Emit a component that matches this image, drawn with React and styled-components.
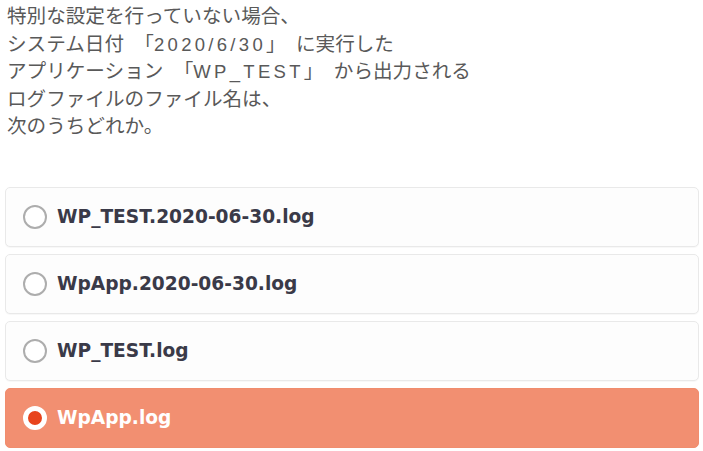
import styled, { createGlobalStyle } from 'styled-components';

const GlobalStyle = createGlobalStyle`
  html, body {
    margin: 0;
    padding: 0;
    background: #ffffff;
  }
`;

const Wrapper = styled.div`
  width: 703px;
  padding: 1px 4px 0 5px;
  box-sizing: border-box;
`;

const Question = styled.p`
  margin: 0 0 48px;
  padding-left: 2px;
  font-family: "Noto Sans CJK JP", "Noto Sans", sans-serif;
  font-size: 19.6px;
  line-height: 27.5px;
  word-spacing: 6px;
  color: #595959;
`;

// 半角英数字は字間を広めに
const Latin = styled.span`
  font-family: "Liberation Sans", Arial, sans-serif;
  font-size: 18.5px;
  line-height: 1;
  letter-spacing: 3.3px;
`;

const Choices = styled.ul`
  list-style: none;
  margin: 0;
  padding: 0;
  display: flex;
  flex-direction: column;
  gap: 7px;
`;

const Choice = styled.li`
  height: 60px;
  box-sizing: border-box;
  display: flex;
  align-items: center;
  gap: 10px;
  padding-left: 17px;
  border: 1px solid ${p => (p.$selected ? '#f08d6e' : '#e9e9e9')};
  border-radius: 5px;
  background: ${p => (p.$selected ? '#f28f71' : '#fdfdfd')};
  box-shadow: ${p => (p.$selected ? 'none' : '0 1px 1px rgba(0,0,0,0.03)')};
`;

const Radio = styled.span`
  width: 24px;
  height: 24px;
  box-sizing: border-box;
  border-radius: 50%;
  flex: none;
  border: ${p => (p.$selected ? '5px solid #ffffff' : '2px solid #adadad')};
  background: ${p => (p.$selected ? '#e8441d' : '#ffffff')};
`;

const Label = styled.span`
  font-family: "DejaVu Sans", Verdana, sans-serif;
  font-weight: bold;
  font-size: 18.6px;
  color: ${p => (p.$selected ? '#ffffff' : '#3a3a48')};
`;

const options = [
  'WP_TEST.2020-06-30.log',
  'WpApp.2020-06-30.log',
  'WP_TEST.log',
  'WpApp.log',
];

export default function App() {
  const selected = 3;
  return (
    <Wrapper>
      <GlobalStyle />
      <Question>
        特別な設定を行っていない場合、<br />
        システム日付 「<Latin>2020/6/30</Latin>」 に実行した<br />
        アプリケーション 「<Latin>WP_TEST</Latin>」 から出力される<br />
        ログファイルのファイル名は、<br />
        次のうちどれか。
      </Question>
      <Choices>
        {options.map((o, i) => (
          <Choice key={o} $selected={i === selected}>
            <Radio $selected={i === selected} />
            <Label $selected={i === selected}>{o}</Label>
          </Choice>
        ))}
      </Choices>
    </Wrapper>
  );
}
